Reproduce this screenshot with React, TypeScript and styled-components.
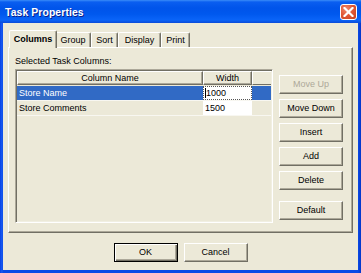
import React from 'react';
import styled, { createGlobalStyle } from 'styled-components';

const GlobalStyle = createGlobalStyle`
  html, body { margin: 0; padding: 0; background: #ffffff; }
  body { font-family: "Liberation Sans", Arial, sans-serif; }
  * { box-sizing: border-box; }
`;

const Window = styled.div`
  width: 361px;
  height: 273px;
  display: flex;
  flex-direction: column;
  background: linear-gradient(to right, #0842e4 0px, #1a5cf2 2px, #0a4ae6 3px, #0a4ae6 358px, #0636c8 361px);
  overflow: hidden;
`;

const TitleBar = styled.div`
  height: 23px;
  flex: none;
  display: flex;
  align-items: center;
  justify-content: space-between;
  padding: 0 4px 0 5px;
  background: linear-gradient(to bottom, #3a8cf8 0px, #0a5ef0 2px, #0054ea 8px, #0058ee 14px, #0a64f8 20px, #0a4ad8 23px);
`;

const Title = styled.span`
  color: #ffffff;
  font-family: "Liberation Sans", Arial, sans-serif;
  font-weight: bold;
  font-size: 10.4px;
  letter-spacing: 0.1px;
  text-shadow: 1px 1px 0 #0a1e8a;
  padding-top: 1px;
`;

const CloseButton = styled.div`
  width: 17px;
  height: 16px;
  margin-top: 1px;
  border: 1px solid #ffffff;
  border-radius: 3px;
  background: radial-gradient(circle at 35% 30%, #f08a6e 0%, #e25a38 45%, #c8401c 100%);
  display: flex;
  align-items: center;
  justify-content: center;
`;

const Body = styled.div`
  flex: 1;
  margin: 0 3px 3px 3px;
  background: #ece9d8;
  padding: 7px 5px 0 5px;
  display: flex;
  flex-direction: column;
  font-size: 9px;
  color: #000000;
`;

const TabStrip = styled.div`
  height: 17px;
  display: flex;
  align-items: flex-end;
  padding-left: 3px;
  position: relative;
  z-index: 1;
`;

const Tab = styled.div<{ $active?: boolean; $w: number }>`
  width: ${p => p.$w}px;
  height: ${p => (p.$active ? 18 : 15)}px;
  margin: ${p => (p.$active ? '0 -2px -1px -2px' : '0')};
  background: #ece9d8;
  border-top: 1px solid #ffffff;
  border-left: 1px solid #ffffff;
  border-right: 1px solid #716f64;
  box-shadow: inset -1px 0 0 #aca899;
  border-radius: 2px 2px 0 0;
  display: flex;
  align-items: ${p => (p.$active ? 'flex-start' : 'center')};
  padding-top: ${p => (p.$active ? 3 : 0)}px;
  justify-content: center;
  font-weight: ${p => (p.$active ? 'bold' : 'normal')};
  position: relative;
  z-index: ${p => (p.$active ? 2 : 1)};
  line-height: 11px;
`;

const Panel = styled.div`
  height: 186px;
  flex: none;
  border-top: 1px solid #ffffff;
  border-left: 1px solid #ffffff;
  border-right: 1px solid #716f64;
  border-bottom: 1px solid #716f64;
  box-shadow: inset -1px -1px 0 #aca899;
  padding: 7px 9px 9px 6px;
  display: flex;
  gap: 6px;
`;

const LeftColumn = styled.div`
  flex: 1;
  display: flex;
  flex-direction: column;
`;

const Label = styled.div`
  line-height: 12px;
  height: 12px;
  margin-bottom: 2px;
`;

const ListView = styled.div`
  flex: 1;
  border-top: 1px solid #aca899;
  border-left: 1px solid #aca899;
  border-right: 1px solid #ffffff;
  border-bottom: 1px solid #ffffff;
  box-shadow: inset 1px 1px 0 #716f64, inset -1px -1px 0 #f1efe2;
  padding: 1px 1px 1px 1px;
  background: #ece9d8;
`;

const Row = styled.div<{ $header?: boolean }>`
  display: grid;
  grid-template-columns: 186px 49px 1fr;
  height: ${p => (p.$header ? 14 : 15)}px;
  margin-bottom: ${p => (p.$header ? 1 : 0)}px;
  border-bottom: ${p => (p.$header ? 'none' : '1px solid #f8f7f1')};
`;

const HeaderCell = styled.div<{ $empty?: boolean }>`
  border-top: 1px solid #ffffff;
  border-left: 1px solid #ffffff;
  border-right: ${p => (p.$empty ? 'none' : '1px solid #716f64')};
  border-bottom: 1px solid #716f64;
  box-shadow: ${p => (p.$empty ? 'none' : 'inset -1px -1px 0 #aca899')};
  display: flex;
  align-items: center;
  justify-content: center;
  line-height: 11px;
`;

const Cell = styled.div<{ $selected?: boolean }>`
  background: ${p => (p.$selected ? '#316ac5' : 'transparent')};
  color: ${p => (p.$selected ? '#ffffff' : '#000000')};
  display: flex;
  align-items: center;
  padding-left: 2px;
  line-height: 11px;
`;

const EditCell = styled.div<{ $focused?: boolean }>`
  background: #ffffff;
  border: 1px ${p => (p.$focused ? 'dotted #555555' : 'solid #ffffff')};
  display: flex;
  align-items: center;
  padding-left: 1px;
  line-height: 11px;
`;

const Caret = styled.span`
  display: inline-block;
  width: 1px;
  height: 10px;
  background: #000000;
  margin-right: 0px;
`;

const RightColumn = styled.div`
  width: 64px;
  flex: none;
  display: flex;
  flex-direction: column;
  gap: 5px;
  padding-top: 20px;
`;

const Button = styled.div<{ $disabled?: boolean; $default?: boolean; $gapBefore?: number }>`
  height: 19px;
  width: 64px;
  flex: none;
  margin-top: ${p => p.$gapBefore ?? 0}px;
  background: #ece9d8;
  border-top: 1px solid ${p => (p.$default ? '#000000' : '#ffffff')};
  border-left: 1px solid ${p => (p.$default ? '#000000' : '#ffffff')};
  border-right: 1px solid ${p => (p.$default ? '#000000' : '#716f64')};
  border-bottom: 1px solid ${p => (p.$default ? '#000000' : '#716f64')};
  box-shadow: ${p =>
    p.$default
      ? 'inset 1px 1px 0 #ffffff, inset -1px -1px 0 #716f64, inset -2px -2px 0 #aca899'
      : 'inset -1px -1px 0 #aca899'};
  color: ${p => (p.$disabled ? '#aca899' : '#000000')};
  display: flex;
  align-items: center;
  justify-content: center;
  line-height: 11px;
`;

const Footer = styled.div`
  flex: 1;
  display: flex;
  justify-content: center;
  align-items: flex-start;
  gap: 6px;
  padding-top: 10px;
`;

const tabs = [
  { label: 'Columns', w: 48, active: true },
  { label: 'Group', w: 36 },
  { label: 'Sort', w: 27 },
  { label: 'Display', w: 43 },
  { label: 'Print', w: 29 },
];

export default function App() {
  return (
    <>
      <GlobalStyle />
      <Window>
        <TitleBar>
          <Title>Task Properties</Title>
          <CloseButton>
            <svg width="11" height="10" viewBox="0 0 11 10">
              <path d="M1.5 1 L9.5 9 M9.5 1 L1.5 9" stroke="#ffffff" strokeWidth="2.2" strokeLinecap="square" />
            </svg>
          </CloseButton>
        </TitleBar>
        <Body>
          <TabStrip>
            {tabs.map(t => (
              <Tab key={t.label} $active={t.active} $w={t.w}>
                {t.label}
              </Tab>
            ))}
          </TabStrip>
          <Panel>
            <LeftColumn>
              <Label>Selected Task Columns:</Label>
              <ListView>
                <Row $header>
                  <HeaderCell>Column Name</HeaderCell>
                  <HeaderCell>Width</HeaderCell>
                  <HeaderCell $empty />
                </Row>
                <Row>
                  <Cell $selected>Store Name</Cell>
                  <EditCell $focused>
                    <Caret />
                    1000
                  </EditCell>
                  <Cell $selected />
                </Row>
                <Row>
                  <Cell>Store Comments</Cell>
                  <EditCell>1500</EditCell>
                  <Cell />
                </Row>
              </ListView>
            </LeftColumn>
            <RightColumn>
              <Button $disabled>Move Up</Button>
              <Button>Move Down</Button>
              <Button>Insert</Button>
              <Button>Add</Button>
              <Button>Delete</Button>
              <Button $gapBefore={6}>Default</Button>
            </RightColumn>
          </Panel>
          <Footer>
            <Button $default>OK</Button>
            <Button>Cancel</Button>
          </Footer>
        </Body>
      </Window>
    </>
  );
}
